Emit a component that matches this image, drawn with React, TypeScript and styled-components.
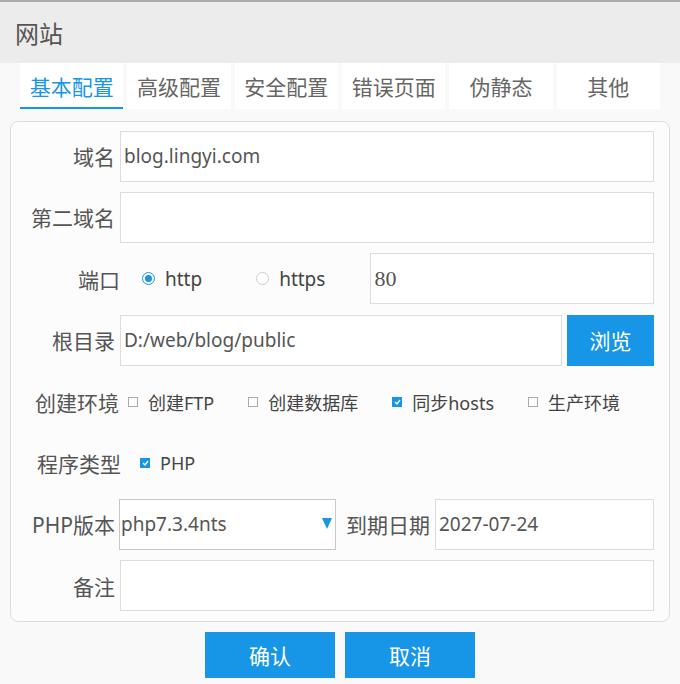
import React, { useState } from 'react'
import styled, { createGlobalStyle } from 'styled-components'

const GlobalStyle = createGlobalStyle`
  html, body {
    margin: 0;
    padding: 0;
    background: #f9f9f9;
  }
  body {
    font-family: "Noto Sans", "Noto Sans CJK SC", sans-serif;
    color: #555;
  }
`

const BLUE = '#1795e6'

const Window = styled.div`
  width: 680px;
  height: 684px;
  border-top: 2px solid #acacac;
  box-sizing: border-box;
  background: #f9f9f9;
  overflow: hidden;
`

const Header = styled.div`
  height: 61px;
  background: #ececec;
  display: flex;
  align-items: center;
  padding-left: 15px;
  font-size: 24px;
  color: #555;
`

const Tabs = styled.div`
  display: grid;
  grid-template-columns: repeat(6, 1fr);
  column-gap: 4px;
  padding: 0 20px;
  height: 46px;
`

const Tab = styled.div<{ $active?: boolean }>`
  display: flex;
  align-items: center;
  justify-content: center;
  background: #fff;
  font-size: 21px;
  color: ${({ $active }) => ($active ? BLUE : '#666')};
  border-bottom: 2px solid ${({ $active }) => ($active ? BLUE : 'transparent')};
  box-sizing: border-box;
  padding-top: 2px;
  cursor: pointer;
`

const Panel = styled.div`
  margin: 12px 10px 0 10px;
  border: 1px solid #dcdcdc;
  border-radius: 8px;
  background: #fcfcfc;
  padding: 9px 15px 10px 0;
  display: flex;
  flex-direction: column;
  gap: 11.4px;
  height: 501px;
  box-sizing: border-box;
`

const Row = styled.div`
  display: flex;
  align-items: center;
  height: 50px;
`

const Label = styled.div<{ $w?: number; $gap?: number }>`
  width: ${({ $w }) => $w ?? 104}px;
  margin-right: ${({ $gap }) => $gap ?? 5}px;
  flex-shrink: 0;
  text-align: right;
  font-size: 21px;
  color: #555;
  white-space: nowrap;
`

const Input = styled.input<{ $serif?: boolean; $w?: number }>`
  height: 51px;
  box-sizing: border-box;
  border: 1px solid #dcdcdc;
  background: #fff;
  font-family: ${({ $serif }) =>
    $serif ? '"Liberation Serif", serif' : '"Noto Sans", "Noto Sans CJK SC", sans-serif'};
  font-size: ${({ $serif }) => ($serif ? 22 : 19)}px;
  color: #555;
  padding: 0 3px;
  outline: none;
  min-width: 0;
  flex: ${({ $w }) => ($w ? `0 0 ${$w}px` : '1 1 auto')};
`

const Radios = styled.div`
  display: flex;
  align-items: center;
  gap: 54px;
  margin-left: 17px;
  margin-right: 45px;
`

const Choice = styled.label`
  display: flex;
  align-items: center;
  gap: 10px;
  font-size: 19px;
  color: #444;
  cursor: pointer;
`

const RadioDot = styled.span<{ $on?: boolean }>`
  width: 13px;
  height: 13px;
  box-sizing: border-box;
  border-radius: 50%;
  border: 1px solid ${({ $on }) => ($on ? BLUE : '#ccc')};
  background: #fff;
  display: flex;
  align-items: center;
  justify-content: center;
  &::after {
    content: '';
    width: 7px;
    height: 7px;
    border-radius: 50%;
    background: ${({ $on }) => ($on ? BLUE : 'transparent')};
  }
`

const Checks = styled.div<{ $start?: number }>`
  display: flex;
  align-items: center;
  gap: 34px;
  margin-left: ${({ $start }) => $start ?? 10}px;
`

const Box = styled.span<{ $on?: boolean }>`
  width: 10px;
  height: 10px;
  box-sizing: border-box;
  border: 1px solid ${({ $on }) => ($on ? BLUE : '#aaa')};
  background: ${({ $on }) => ($on ? BLUE : '#fff')};
  display: flex;
  align-items: center;
  justify-content: center;
`

const CheckText = styled.span`
  font-size: 18px;
  color: #444;
`

const BrowseButton = styled.button`
  margin-left: 5px;
  width: 87px;
  height: 51px;
  border: none;
  background: ${BLUE};
  color: #fff;
  font-family: "Noto Sans CJK SC", sans-serif;
  font-size: 21px;
  cursor: pointer;
`

const Select = styled.div`
  position: relative;
  width: 217px;
  height: 51px;
  box-sizing: border-box;
  border: 1px solid #c8c8c8;
  background: #fff;
  display: flex;
  align-items: center;
  padding-left: 1px;
  font-size: 19px;
  color: #555;
  flex-shrink: 0;
`

const Caret = styled.span`
  position: absolute;
  right: 3px;
  top: 18px;
  width: 0;
  height: 0;
  border-left: 5px solid transparent;
  border-right: 5px solid transparent;
  border-top: 11px solid ${BLUE};
`

const Footer = styled.div`
  display: flex;
  justify-content: center;
  gap: 10px;
  margin-top: 10px;
`

const ActionButton = styled.button`
  width: 130px;
  height: 46px;
  border: none;
  background: ${BLUE};
  color: #fff;
  font-family: "Noto Sans CJK SC", sans-serif;
  font-size: 21px;
  cursor: pointer;
`

const Check = ({ on, text }: { on?: boolean; text: string }) => (
  <Choice>
    <Box $on={on}>
      {on && (
        <svg width="7" height="6" viewBox="0 0 7 6">
          <path d="M1 3 L3 5 L6 1" fill="none" stroke="#fff" strokeWidth="1.3" />
        </svg>
      )}
    </Box>
    <CheckText>{text}</CheckText>
  </Choice>
)

const tabs = ['基本配置', '高级配置', '安全配置', '错误页面', '伪静态', '其他']

export default function App() {
  const [active, setActive] = useState(0)
  const [https, setHttps] = useState(false)

  return (
    <Window>
      <GlobalStyle />
      <Header>网站</Header>
      <Tabs>
        {tabs.map((t, i) => (
          <Tab key={t} $active={i === active} onClick={() => setActive(i)}>
            {t}
          </Tab>
        ))}
      </Tabs>
      <Panel>
        <Row>
          <Label>域名</Label>
          <Input defaultValue="blog.lingyi.com" />
        </Row>
        <Row>
          <Label>第二域名</Label>
          <Input />
        </Row>
        <Row>
          <Label $w={109}>端口</Label>
          <Radios>
            <Choice onClick={() => setHttps(false)}>
              <RadioDot $on={!https} />
              http
            </Choice>
            <Choice onClick={() => setHttps(true)}>
              <RadioDot $on={https} />
              https
            </Choice>
          </Radios>
          <Input $serif defaultValue="80" />
        </Row>
        <Row>
          <Label>根目录</Label>
          <Input defaultValue="D:/web/blog/public" />
          <BrowseButton>浏览</BrowseButton>
        </Row>
        <Row>
          <Label $w={108} $gap={0}>创建环境</Label>
          <Checks $start={9}>
            <Check text="创建FTP" />
            <Check text="创建数据库" />
            <Check on text="同步hosts" />
            <Check text="生产环境" />
          </Checks>
        </Row>
        <Row>
          <Label $w={110} $gap={0}>程序类型</Label>
          <Checks $start={19}>
            <Check on text="PHP" />
          </Checks>
        </Row>
        <Row>
          <Label $gap={4}>PHP版本</Label>
          <Select>
            php7.3.4nts
            <Caret />
          </Select>
          <Label $w={94} $gap={5}>到期日期</Label>
          <Input defaultValue="2027-07-24" />
        </Row>
        <Row>
          <Label>备注</Label>
          <Input />
        </Row>
      </Panel>
      <Footer>
        <ActionButton>确认</ActionButton>
        <ActionButton>取消</ActionButton>
      </Footer>
    </Window>
  )
}
